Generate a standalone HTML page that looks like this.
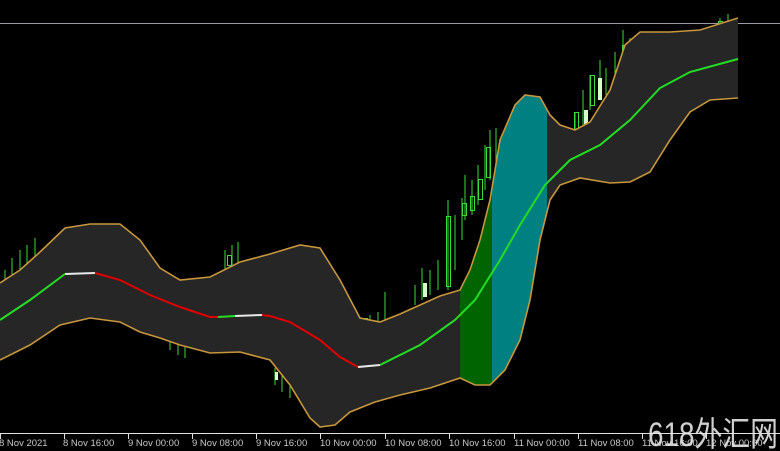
<!DOCTYPE html>
<html><head><style>
html,body{margin:0;padding:0;background:#000;width:780px;height:451px;overflow:hidden}
svg{display:block}
text{font-family:"Liberation Sans",sans-serif;font-size:9.5px;fill:#c8c8c8}
</style></head><body>
<svg width="780" height="451" viewBox="0 0 780 451">
<defs>
<clipPath id="band"><path d="M0,283 L20,270 L40,252 L65,228 L90,224 L120,224 L140,240 L160,268 L180,280 L210,277 L240,262 L270,254 L300,245 L320,248 L340,280 L360,318 L380,322 L400,314 L420,305 L440,296 L460,290 L470,270 L480,240 L490,200 L500,140 L515,105 L525,95 L540,97 L550,115 L560,125 L575,130 L590,122 L610,90 L625,45 L640,32 L670,32 L700,30 L738,18 L738,98 L710,100 L690,112 L670,140 L650,172 L630,182 L610,183 L580,178 L560,185 L550,200 L540,240 L530,300 L520,340 L505,370 L490,385 L475,385 L460,378 L430,388 L400,395 L375,402 L350,412 L335,425 L320,427 L310,418 L290,385 L270,360 L240,352 L210,353 L180,345 L160,338 L140,332 L120,322 L90,318 L60,325 L30,345 L0,360 Z"/></clipPath>
</defs>
<line x1="0" y1="23.5" x2="780" y2="23.5" stroke="#9a9aa8" stroke-width="1"/>
<g stroke="#3ddc3d" stroke-width="1" fill="none">
<path d="M5,270V285 M12,258V280 M20,250V275 M27,245V268 M35,238V262 M225,250V280 M232,245V272 M238,242V265 M162,320V335 M170,330V350 M178,338V355 M185,342V358 M275,368V385 M282,372V392 M290,380V398 M370,315V332 M378,312V330 M385,292V325 M415,285V305 M422,268V300 M430,270V295 M438,260V290 M448,200V290 M455,215V270 M462,198V240 M465,175V220 M472,180V215 M478,165V205 M485,145V190 M490,130V180 M496,128V180 M575,112V130 M583,90V128 M590,75V110 M600,60V100 M606,68V95 M615,52V80 M623,30V70 M630,38V55 M720,18V28 M728,14V26"/>
<rect x="446.5" y="216.5" width="4" height="70"/><rect x="462.5" y="203.5" width="4" height="12"/><rect x="470.5" y="196.5" width="4" height="14"/><rect x="478.5" y="179.5" width="4" height="20"/><rect x="486.5" y="147.5" width="4" height="30"/><rect x="574.5" y="112.5" width="4" height="17"/><rect x="590.5" y="75.5" width="4" height="30"/><rect x="622.5" y="45.5" width="4" height="25"/><rect x="718.5" y="21.5" width="4" height="7"/><rect x="227.5" y="255.5" width="4" height="10"/><rect x="363.5" y="318.5" width="4" height="12"/>
</g>
<g fill="#d8ffd0"><rect x="159" y="325" width="4" height="8"/><rect x="423" y="283" width="4" height="14"/><rect x="584" y="110" width="4" height="18"/><rect x="598" y="78" width="4" height="22"/><rect x="275" y="372" width="3" height="8"/></g>
<g clip-path="url(#band)">
<rect x="0" y="0" width="740" height="440" fill="#262626"/>
<rect x="460" y="0" width="32" height="440" fill="#006400"/>
<rect x="492" y="0" width="55" height="440" fill="#008080"/>
</g>
<g fill="none" stroke="#c8963c" stroke-width="1.6">
<path d="M0,283 L20,270 L40,252 L65,228 L90,224 L120,224 L140,240 L160,268 L180,280 L210,277 L240,262 L270,254 L300,245 L320,248 L340,280 L360,318 L380,322 L400,314 L420,305 L440,296 L460,290 L470,270 L480,240 L490,200 L500,140 L515,105 L525,95 L540,97 L550,115 L560,125 L575,130 L590,122 L610,90 L625,45 L640,32 L670,32 L700,30 L738,18"/>
<path d="M0,360 L30,345 L60,325 L90,318 L120,322 L140,332 L160,338 L180,345 L210,353 L240,352 L270,360 L290,385 L310,418 L320,427 L335,425 L350,412 L375,402 L400,395 L430,388 L460,378 L475,385 L490,385 L505,370 L520,340 L530,300 L540,240 L550,200 L560,185 L580,178 L610,183 L630,182 L650,172 L670,140 L690,112 L710,100 L738,98"/>
</g>
<g fill="none" stroke-width="2">
<path stroke="#22dd22" d="M0,320 L30,300 L65,274"/>
<path stroke="#e8e8e8" d="M65,274 L95,273"/>
<path stroke="#e00000" d="M95,273 L120,280 L150,295 L180,307 L210,317 L218,317"/>
<path stroke="#22dd22" d="M218,317 L235,316"/>
<path stroke="#e8e8e8" d="M235,316 L262,315"/>
<path stroke="#e00000" d="M262,315 L270,316 L290,322 L320,340 L340,357 L358,367"/>
<path stroke="#e8e8e8" d="M358,367 L380,365"/>
<path stroke="#22dd22" d="M380,365 L420,345 L455,320 L475,300 L500,260 L520,225 L545,185 L570,160 L600,145 L630,120 L660,88 L690,72 L738,59"/>
</g>
<line x1="0" y1="433.5" x2="780" y2="433.5" stroke="#e0e0e0"/>
<g stroke="#e0e0e0"><path d="M0.5,434V439 M64.5,434V439 M128.5,434V439 M192.5,434V439 M256.5,434V439 M320.5,434V439 M385.5,434V439 M449.5,434V439 M514.5,434V439 M578.5,434V439 M642.5,434V439 M706.5,434V439"/></g>
<g>
<text x="-1" y="446">8 Nov 2021</text><text x="63" y="446">8 Nov 16:00</text><text x="128" y="446">9 Nov 00:00</text><text x="192" y="446">9 Nov 08:00</text><text x="256" y="446">9 Nov 16:00</text><text x="320" y="446">10 Nov 00:00</text><text x="385" y="446">10 Nov 08:00</text><text x="449" y="446">10 Nov 16:00</text><text x="514" y="446">11 Nov 00:00</text><text x="578" y="446">11 Nov 08:00</text><text x="642" y="446">11 Nov 16:00</text><text x="706" y="446">12 Nov 00:00</text>
</g>
<text x="648" y="446" textLength="130" lengthAdjust="spacingAndGlyphs" style="font-size:34px;fill:#e6e6e6;font-family:'Liberation Sans','Noto Sans CJK SC',sans-serif;opacity:.9">618外汇网</text>
</svg>
</body></html>
